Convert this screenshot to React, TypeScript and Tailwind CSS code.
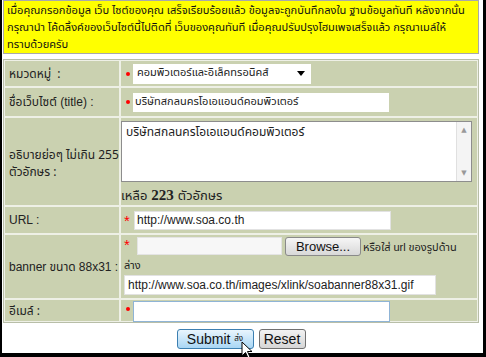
import React from "react";

const thai = { fontFamily: 'Tahoma, "Noto Sans Thai", "Noto Sans", "DejaVu Sans", sans-serif' };
const arial = { fontFamily: '"Liberation Sans", Arial, sans-serif' };

function Star({ big = false }: { big?: boolean }) {
  return big ? (
    <span className="text-[#ff0000] text-[15px] leading-none w-[10px] shrink-0" style={arial}>*</span>
  ) : (
    <span className="w-[4px] h-[4px] rounded-full bg-[#ff0000] shrink-0 ml-[1px] mr-[3px]" />
  );
}

function Cursor() {
  return (
    <svg className="absolute left-[239px] top-[341px]" width="12" height="18" viewBox="0 0 12 18">
      <path d="M1 1 L1 15 L4.5 11.5 L7 17 L9 16 L6.5 10.5 L11 10.5 Z" fill="#fff" stroke="#000" strokeWidth="1" />
    </svg>
  );
}

export default function App() {
  return (
    <div className="w-[486px] h-[357px] bg-black overflow-hidden">
      <div className="relative ml-[2px] w-[481px] h-[353px] bg-white pt-0">
        {/* Notice box */}
        <div
          className="ml-[1px] w-[476px] h-[54px] bg-[#ffff00] border border-[#a9a9a9] px-[3px] pt-[1px] text-[11.1px] leading-[17px] text-[#111] whitespace-nowrap overflow-hidden"
          style={thai}
        >
          <div>เมื่อคุณกรอกข้อมูล เว็บ ไซต์ของคุณ เสร็จเรียบร้อยแล้ว ข้อมูลจะถูกบันทึกลงใน ฐานข้อมูลทันที หลังจากนั้น</div>
          <div>กรุณานำ โค้ดลิ้งค์ของเว็บไซต์นี้ไปติดที่ เว็บของคุณทันที เมื่อคุณปรับปรุงโฮมเพจเสร็จแล้ว กรุณาเมล์ให้</div>
          <div>ทราบด้วยครับ</div>
        </div>

        {/* Form table */}
        <div className="ml-[1px] mt-[5px] w-[476px] border border-[#b8bea8] bg-[#eef0e6] p-[1px]">
          <div className="grid grid-cols-[114px_1fr] gap-[2px] text-[12px] text-[#222]" style={thai}>
            {/* Row 1 */}
            <div className="h-[25px] bg-[#cad1b0] flex items-center pl-[4px]">หมวดหมู่ &nbsp;:</div>
            <div className="h-[25px] bg-[#cad1b0] flex items-center pl-[4px]">
              <Star />
              <div className="w-[178px] h-[20px] bg-white flex items-center pl-[4px] text-[11px] relative">
                คอมพิวเตอร์และอิเล็คทรอนิคส์
                <span className="absolute right-[6px] top-[7px] w-0 h-0 border-l-[4px] border-r-[4px] border-t-[5px] border-l-transparent border-r-transparent border-t-black" />
              </div>
            </div>
            {/* Row 2 */}
            <div className="h-[28px] bg-[#cad1b0] flex items-center pl-[4px]" style={arial}>
              <span style={thai}>ชื่อเว็บไซต์</span>&nbsp;(title) :
            </div>
            <div className="h-[28px] bg-[#cad1b0] flex items-center pl-[4px]">
              <Star />
              <div className="w-[256px] h-[19px] bg-white flex items-center pl-[2px] text-[11px]">บริษัทสกลนครโอเอแอนด์คอมพิวเตอร์</div>
            </div>
            {/* Row 3 */}
            <div className="h-[87px] bg-[#cad1b0] flex items-center pl-[4px] pt-[4px] leading-[17px]">
              อธิบายย่อๆ ไม่เกิน 255 ตัวอักษร :
            </div>
            <div className="h-[87px] bg-[#cad1b0] pl-[0px] pt-[3px]">
              <div className="w-[351px] h-[61px] bg-white border border-[#8d8d8d] flex">
                <div className="flex-1 pl-[4px] pt-[1px] text-[12px]">บริษัทสกลนครโอเอแอนด์คอมพิวเตอร์</div>
                <div className="w-[15px] bg-[#f4f4f4] border-l border-[#e0e0e0] flex flex-col justify-between items-center text-[7px] text-[#999] py-[3px]">
                  <span>▲</span>
                  <span>▼</span>
                </div>
              </div>
              <div className="mt-[2px] text-[13px] text-[#222] flex items-baseline gap-[4px]">
                <span>เหลือ</span>
                <span className="font-bold text-[15px]" style={{ fontFamily: '"Liberation Serif", serif' }}>223</span>
                <span>ตัวอักษร</span>
              </div>
            </div>
            {/* Row 4 */}
            <div className="h-[26px] bg-[#cad1b0] flex items-center pl-[4px]" style={arial}>URL :</div>
            <div className="h-[26px] bg-[#cad1b0] flex items-center pl-[3px]">
              <Star big />
              <div className="w-[257px] h-[19px] bg-white border border-[#e2e2e2] flex items-center pl-[2px] text-[12px]" style={arial}>
                http://www.soa.co.th
              </div>
            </div>
            {/* Row 5 */}
            <div className="h-[63px] bg-[#cad1b0] flex items-center pl-[4px]" style={arial}>
              banner <span style={thai}>&nbsp;ขนาด&nbsp;</span>88x31 :
            </div>
            <div className="h-[63px] bg-[#cad1b0] pl-[3px] pt-[2px]">
              <div className="flex items-start">
                <Star big />
                <div className="ml-[3px] w-[145px] h-[18px] bg-[#f7f7f7] border border-[#e4e4e4]" />
                <div
                  className="ml-[3px] w-[76px] h-[19px] rounded-[3px] border border-[#8a8a8a] bg-gradient-to-b from-[#f6f6f6] to-[#d8d8d8] flex items-center justify-center text-[13px] text-[#111]"
                  style={arial}
                >
                  Browse...
                </div>
                <span className="ml-[2px] mt-[2px] text-[11px]" style={thai}>
                  หรือใส่ <span style={arial}>url</span> ของรูปด้าน
                </span>
              </div>
              <div className="text-[11px] leading-[14px] mt-[2px]">ล่าง</div>
              <div className="mt-[2px] w-[312px] h-[20px] bg-white border border-[#e2e2e2] flex items-center pl-[3px] text-[12px]" style={arial}>
                http://www.soa.co.th/images/xlink/soabanner88x31.gif
              </div>
            </div>
            {/* Row 6 */}
            <div className="h-[21px] bg-[#cad1b0] flex items-center pl-[4px]">อีเมล์ :</div>
            <div className="h-[21px] bg-[#cad1b0] flex items-start pl-[5px] pt-[1px]">
              <span className="w-[4px] h-[4px] rounded-full bg-[#ff0000] shrink-0 mr-[3px] mt-[6px]" />
              <div className="w-[257px] h-[21px] bg-white border border-[#8fb4d6]" />
            </div>
          </div>
        </div>

        {/* Buttons */}
        <div className="flex justify-center gap-[5px] mt-[6px] pl-[0px] ml-[-3px]">
          <div
            className="w-[77px] h-[20px] rounded-[3px] border border-[#3c7fb1] bg-gradient-to-b from-[#e9f5fd] to-[#a9d6f4] flex items-center justify-center text-[14px] text-[#111]"
            style={arial}
          >
            Submit&nbsp;<span className="text-[8px]" style={thai}>ส่ง</span>
          </div>
          <div
            className="w-[47px] h-[20px] rounded-[3px] border border-[#707070] bg-gradient-to-b from-[#f2f2f2] to-[#d6d6d6] flex items-center justify-center text-[14px] text-[#111]"
            style={arial}
          >
            Reset
          </div>
        </div>
        <Cursor />
      </div>
    </div>
  );
}
